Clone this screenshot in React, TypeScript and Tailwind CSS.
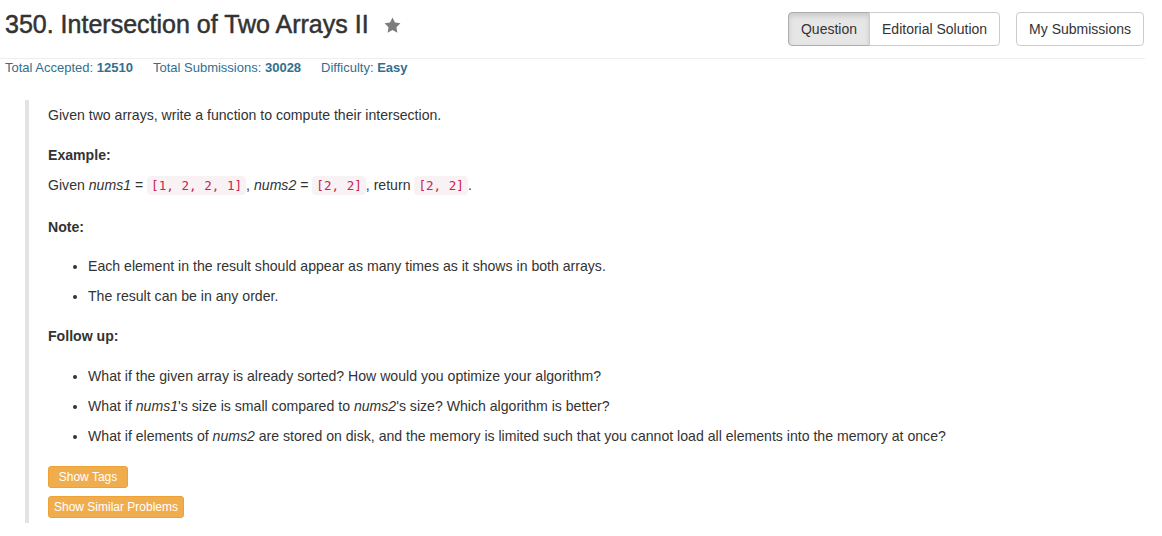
import React from 'react'

const sans = { fontFamily: '"Liberation Sans", Arial, sans-serif' }

function Code({ children }: { children: React.ReactNode }) {
  return (
    <code className="rounded-[4px] bg-[#f9f2f4] px-[4px] py-[2px] text-[12.6px] text-[#c7254e] [font-family:'DejaVu_Sans_Mono',monospace]">
      {children}
    </code>
  )
}

function StarIcon() {
  return (
    <svg width="19" height="19" viewBox="0 0 24 24" className="ml-[14px] mt-[1px]">
      <polygon
        points="12,2 15.09,8.26 22,9.27 17,14.14 18.18,21.02 12,17.77 5.82,21.02 7,14.14 2,9.27 8.91,8.26"
        fill="#7c7c7c"
      />
    </svg>
  )
}

export default function App() {
  const followUps = [
    <>What if the given array is already sorted? How would you optimize your algorithm?</>,
    <>
      What if <em>nums1</em>'s size is small compared to <em>nums2</em>'s size? Which algorithm is better?
    </>,
    <>
      What if elements of <em>nums2</em> are stored on disk, and the memory is limited such that you cannot
      load all elements into the memory at once?
    </>
  ]

  return (
    <div className="min-h-[536px] w-full bg-white text-[#333]" style={sans}>
      <div className="w-[1145px]">
        {/* Header */}
        <div className="flex items-start justify-between border-b border-[#eee] pb-[12px] pl-[5px] pr-[1px] pt-[12px]">
          <div className="-mt-px flex items-center">
            <h3 className="text-[25px] leading-[27px] font-normal text-[#333] [-webkit-text-stroke:0.5px_#333]">
              350. Intersection of Two Arrays II
            </h3>
            <StarIcon />
          </div>
          <div className="flex gap-[16px] text-[14px] leading-[20px]">
            <div className="flex">
              <button className="rounded-l-[4px] border border-[#adadad] bg-[#e6e6e6] px-[12px] py-[6px] text-[#333] shadow-[inset_0_3px_5px_rgba(0,0,0,0.125)]">
                Question
              </button>
              <button className="-ml-px rounded-r-[4px] border border-[#ccc] bg-white px-[12px] py-[6px] text-[#333]">
                Editorial Solution
              </button>
            </div>
            <button className="rounded-[4px] border border-[#ccc] bg-white px-[12px] py-[6px] text-[#333]">
              My Submissions
            </button>
          </div>
        </div>

        {/* Stats */}
        <div className="flex gap-[20px] pl-[5px] text-[13px] leading-[18px] text-[#31708f]">
          <span>
            Total Accepted: <b>12510</b>
          </span>
          <span>
            Total Submissions: <b>30028</b>
          </span>
          <span>
            Difficulty: <b>Easy</b>
          </span>
        </div>

        {/* Question body */}
        <div className="ml-[25px] mt-[23px] border-l-[4px] border-[#e3e3e3] pb-[5px] pl-[19px] pt-[5px] text-[14.1px] leading-[20px]">
          <p className="mb-[20px]">Given two arrays, write a function to compute their intersection.</p>
          <p className="mb-[10px] font-bold">Example:</p>
          <p className="mb-[21px]">
            Given <em>nums1</em> = <Code>[1, 2, 2, 1]</Code>, <em>nums2</em> = <Code>[2, 2]</Code>, return{' '}
            <Code>[2, 2]</Code>.
          </p>
          <p className="mb-[19px] font-bold">Note:</p>
          <ul className="mb-[20px] list-disc pl-[40px]">
            <li className="mb-[10px]">Each element in the result should appear as many times as it shows in both arrays.</li>
            <li>The result can be in any order.</li>
          </ul>
          <p className="mb-[20px] font-bold">Follow up:</p>
          <ul className="mb-[20px] list-disc pl-[40px]">
            {followUps.map((item, i) => (
              <li key={i} className={i < followUps.length - 1 ? 'mb-[10px]' : ''}>
                {item}
              </li>
            ))}
          </ul>
          <div className="flex flex-col items-start gap-[8px]">
            <button className="h-[22px] w-[80px] rounded-[3px] border border-[#eea236] bg-[#f0ad4e] text-center text-[12px] leading-[18px] text-white">
              Show Tags
            </button>
            <button className="h-[22px] w-[136px] rounded-[3px] border border-[#eea236] bg-[#f0ad4e] text-center text-[12px] leading-[18px] text-white">
              Show Similar Problems
            </button>
          </div>
        </div>
      </div>
    </div>
  )
}
